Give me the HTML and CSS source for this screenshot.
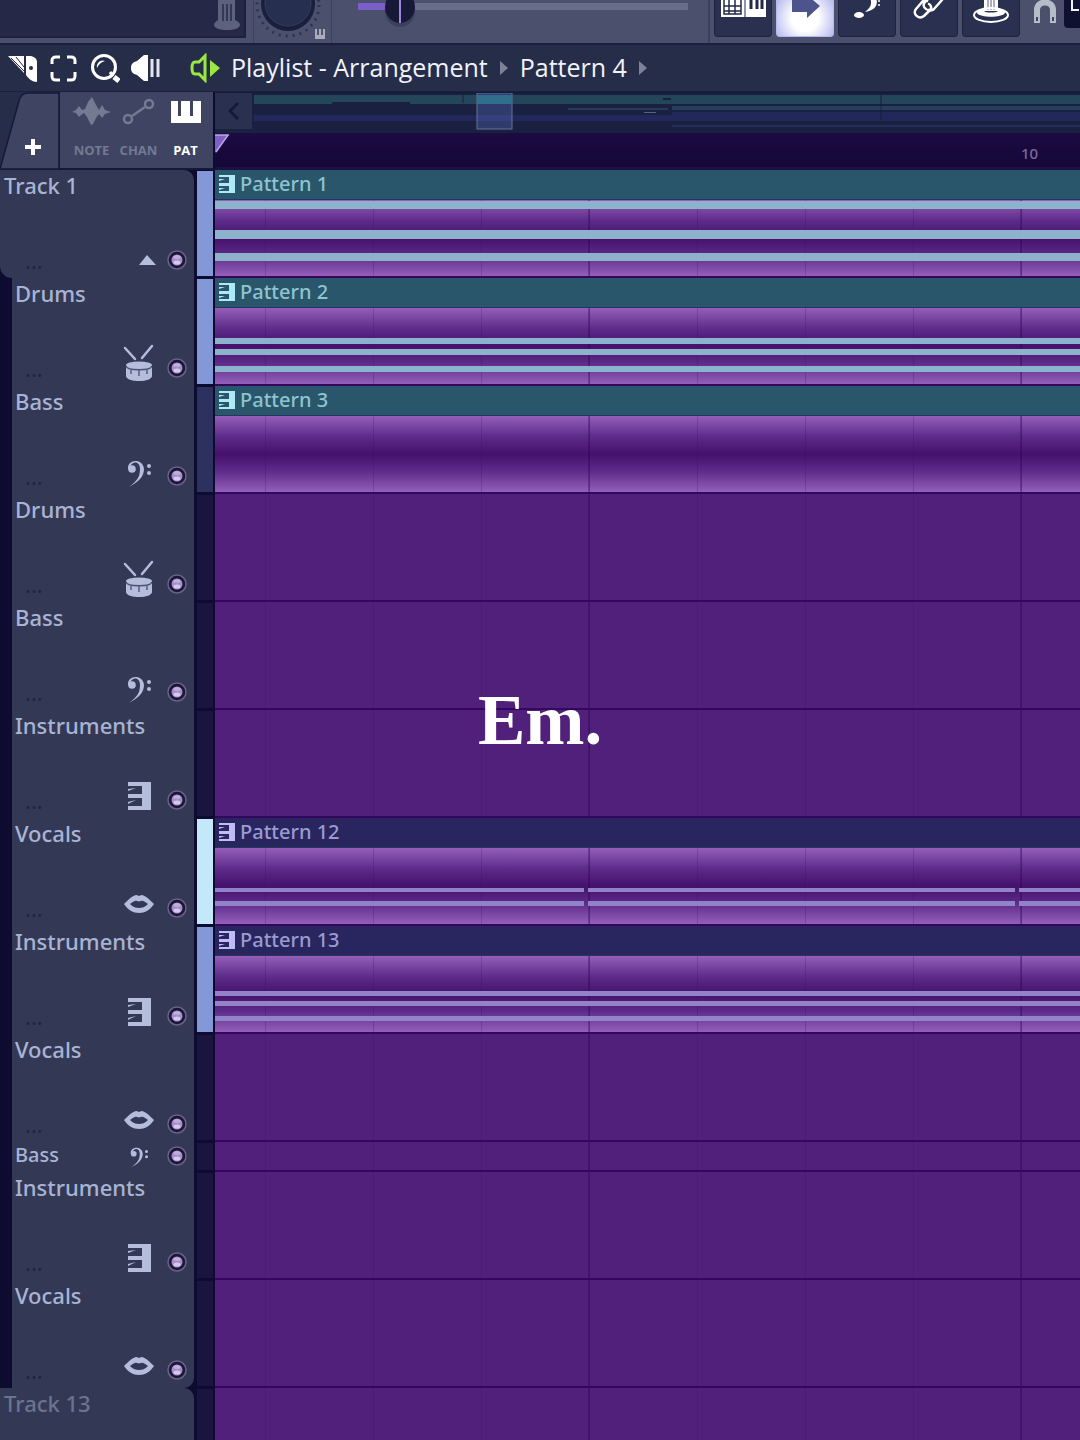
FILE: index.html
```
<!DOCTYPE html>
<html lang="en">
<head>
  <meta charset="UTF-8">
  <meta name="viewport" content="width=device-width, initial-scale=1.0">
  <title>Playlist - Arrangement</title>
  <link rel="stylesheet" href="styles.css">
</head>
<body>
  <svg class="sprite" aria-hidden="true">
    <symbol id="i-drum" viewBox="0 0 40 40">
      <path d="M6 4l10 11M33 2L23 14" stroke="currentColor" stroke-width="2.5" stroke-linecap="round"/>
      <path d="M7 22v10c0 3 6 5 13 5s13-2 13-5V22z" fill="currentColor"/>
      <ellipse cx="20" cy="21" rx="13" ry="3.5" fill="currentColor"/>
      <path d="M7 22c1 5 25 5 26 0M12 25v5M20 26v6M28 25v5" fill="none" stroke="#4c5270" stroke-width="1.3"/>
    </symbol>
    <symbol id="i-bass" viewBox="0 0 40 40">
      <circle cx="13" cy="17" r="3.8" fill="currentColor"/>
      <path d="M9 17C8 7 24 6 25 17c0 8-6 13-15 18 8-6 11-10 11-18 0-8-8-9-11 0z" fill="currentColor"/>
      <circle cx="30" cy="14" r="2" fill="currentColor"/>
      <circle cx="30" cy="21" r="2" fill="currentColor"/>
    </symbol>
    <symbol id="i-keys" viewBox="0 0 40 40">
      <path d="M9 6h23v28H9v-4h14v-8H9v-4h14v-8H9z" fill="currentColor"/>
      <path d="M9 13l8-1-8 3zM9 26l8-2-8 4z" fill="currentColor"/>
    </symbol>
    <symbol id="i-lips" viewBox="0 0 40 40">
      <path fill-rule="evenodd" d="M5 20c5-5 8-8 12-9 2 0 2 1 3 1s1-1 3-1c4 1 7 4 12 9-4 6-9 9-15 9S9 26 5 20zm6 0c3 3 6 4 9 4s6-1 9-4c-3-2-5-4-7-3-2 .6-2 .6-4 0-2-1-4 1-7 3z" fill="currentColor"/>
    </symbol>
    <symbol id="i-fold" viewBox="0 0 40 40">
      <path d="M20 29l8-10 9 10z" fill="currentColor"/>
    </symbol>
    <symbol id="i-led" viewBox="0 0 20 20">
      <circle cx="10" cy="10" r="9" fill="#1d1638" stroke="#69638a" stroke-width="1.5"/>
      <circle cx="10" cy="10" r="5.5" fill="#a48fcb"/>
      <ellipse cx="10" cy="7" rx="3.5" ry="1.8" fill="#bfb2da"/>
      <ellipse cx="10" cy="12.5" rx="3.5" ry="2" fill="#d5c8ec"/>
    </symbol>
    <symbol id="i-clip" viewBox="0 0 16 18">
      <path d="M0 0h16v18H0v-2h10v-5H0V8h10V2H0z" fill="currentColor"/>
      <path d="M0 4l6 0-6 2zM0 13l6 0-6 2z" fill="currentColor"/>
    </symbol>
    <symbol id="i-arrow" viewBox="0 0 10 16">
      <path d="M1 1l8 7-8 7z" fill="currentColor"/>
    </symbol>
  </svg>

  <header class="toolbar">
    <div class="hint">
      <svg width="26" height="30" viewBox="0 0 26 30"><path d="M4 0h17v20c3 1 5 3 5 5 0 3-6 5-13 5S0 28 0 25c0-2 2-4 4-5z" fill="#5d627c"/><path d="M9 4v17M13 4v17M17 4v17" stroke="#343858" stroke-width="2"/></svg>
    </div>
    <div class="knob">
      <svg width="77" height="44" viewBox="0 0 77 44">
        <circle cx="34" cy="5" r="31" fill="none" stroke="#2d3350" stroke-width="3" stroke-dasharray="2 5"/>
        <circle cx="34" cy="4" r="27" fill="#191f3c"/>
        <circle cx="34" cy="3" r="23" fill="#262f50" stroke="#343c60"/>
        <path d="M61 29h10v10H61z" fill="#a9adbd"/>
        <path d="M64 29v6M68 29v6" stroke="#333954" stroke-width="1.5"/>
      </svg>
    </div>
    <div class="pitch">
      <input type="range" class="slider" min="0" max="100" value="9" aria-label="Song position">
    </div>
    <div class="modes">
      <button class="mode" aria-label="Typing keyboard">
        <svg width="58" height="36" viewBox="0 0 58 36"><path d="M7-5h45v22H7z" fill="#fff"/><path d="M10 0v14h17V0M10 6h17M10 11h17M15 0v14M21 0v14" fill="none" stroke="#232848" stroke-width="1.5"/><path d="M31-5v22" stroke="#232848"/><path d="M37-5V9M43-5V9M48-5V9" stroke="#232848" stroke-width="3"/></svg>
      </button>
      <button class="mode active" aria-label="Step edit">
        <svg width="58" height="36" viewBox="0 0 58 36"><path d="M16 0h15v-5l13 11-13 12v-6H16z" fill="#4d548b"/></svg>
      </button>
      <button class="mode" aria-label="Slide">
        <svg width="58" height="36" viewBox="0 0 58 36"><ellipse cx="21" cy="15" rx="5" ry="3" fill="#fff"/><path d="M32-2c3 7-1 11-5 14 9-1 14-7 11-14z" fill="#fff"/><path d="M41 0v8" stroke="#fff" stroke-width="1.5" stroke-dasharray="2 2"/></svg>
      </button>
      <button class="mode" aria-label="Link">
        <svg width="58" height="36" viewBox="0 0 58 36"><g fill="none" stroke="#fff" stroke-width="2.5" stroke-linecap="round"><path d="M27 1c-2-1-4 0-5 1l-6 7c-4 5 3 11 8 7l6-6c2-2 1-5-1-6"/><path d="M26 9c-3-2-3-5-1-7l8-8M28 10c3 1 5 0 6-1l8-9"/></g></svg>
      </button>
      <button class="mode" aria-label="Online">
        <svg width="58" height="36" viewBox="0 0 58 36"><path d="M22-3h14v14H22z" fill="#fff"/><path d="M26-2v12M29-2v12M32-2v12" stroke="#596080"/><ellipse cx="29" cy="15" rx="17" ry="7" fill="none" stroke="#fff" stroke-width="2"/><path d="M15 13c0-3 3-4 7-4v2c2 2 12 2 14 0V9c4 0 7 1 7 4-3 5-25 5-28 0z" fill="#fff"/></svg>
      </button>
    </div>
    <svg class="magnet" width="26" height="26" viewBox="0 0 26 26"><path d="M5 20V10c0-10 16-10 16 0v10" fill="none" stroke="#b3bec7" stroke-width="6"/><path d="M3 16h4v6H3zM19 16h4v6h-4z" fill="#3d4564" stroke="#b3bec7" stroke-width="2"/></svg>
    <div class="snap">
      <svg width="15" height="27" viewBox="0 0 15 27"><path d="M8-2v12h9" fill="none" stroke="#f0f2f8" stroke-width="2"/></svg>
    </div>
  </header>

  <nav class="titlebar">
    <button class="tool" aria-label="Slice">
      <svg width="30" height="30" viewBox="0 0 30 30"><path d="M0 3h16v17z" fill="#fff"/><path d="M3 5l13 13M8 4l8 10" stroke="#262c48"/><path d="M18 3h5c4 1 6 3 6 6v20c-5 0-8-3-11-7z" fill="#fff"/><circle cx="23" cy="15" r="2" fill="#262c48"/></svg>
    </button>
    <button class="tool" aria-label="Select">
      <svg width="30" height="30" viewBox="0 0 30 30"><path d="M3 11V8c0-3 1-4 4-4h4M18 4h4c3 0 4 1 4 4v3M26 19v4c0 3-1 4-4 4h-4M11 27H7c-3 0-4-1-4-4v-4" fill="none" stroke="#fff" stroke-width="3"/></svg>
    </button>
    <button class="tool" aria-label="Zoom">
      <svg width="30" height="30" viewBox="0 0 30 30"><circle cx="14" cy="14" r="11.5" fill="none" stroke="#fff" stroke-width="3"/><path d="M7 15c-1-5 4-9 8-7-4 1-6 3-8 7z" fill="#fff"/><path d="M20 19l3 4" stroke="#fff" stroke-width="3"/><path d="M24 24l5 4" stroke="#fff" stroke-width="5"/></svg>
    </button>
    <button class="tool" aria-label="Playback">
      <svg width="30" height="30" viewBox="0 0 30 30"><path d="M0 15c0-4 2-6 6-7l7-6h4v26h-4l-7-6c-4-1-6-3-6-7z" fill="#fff"/><path d="M21 6v18M27 6v18" stroke="#e4e6f0" stroke-width="3"/></svg>
    </button>
    <button class="tool tool-menu" aria-label="Playlist menu">
      <svg width="30" height="30" viewBox="0 0 30 30"><path d="M15 3v24l-6-6H5c-4 0-4-12 0-12h4z" fill="none" stroke="#9be93f" stroke-width="3"/><path d="M20 7l10 8-10 9z" fill="#9be93f"/></svg>
    </button>
    <span class="crumb">Playlist - Arrangement</span>
    <svg class="crumb-arrow" width="10" height="16"><use href="#i-arrow"/></svg>
    <span class="crumb">Pattern 4</span>
    <svg class="crumb-arrow" width="10" height="16"><use href="#i-arrow"/></svg>
  </nav>

  <section class="head">
    <div class="picker">
      <button class="add" aria-label="Add track">
        <svg width="59" height="77" viewBox="0 0 59 77"><path d="M0 77L19 9c2-6 4-8 9-8h31v76z" fill="#3e4462" stroke="#141a3a" stroke-width="1.5"/><path d="M33 47v16M25 55h16" stroke="#fff" stroke-width="4"/></svg>
      </button>
      <div class="kinds">
        <button class="kind">
          <svg width="40" height="30" viewBox="0 0 40 30"><path d="M0 16l4-2 3-4 3 4 3-1 3-7 4-5 4 8 3 5 3-5 3 5 6 2-6 2-3 4-3-4-3 4-3 6-2 1-4-8-3-4-3 2-2 2-3-4z" fill="currentColor"/></svg>
          NOTE
        </button>
        <button class="kind">
          <svg width="40" height="30" viewBox="0 0 40 30"><g fill="none" stroke="currentColor" stroke-width="2.5"><circle cx="9" cy="23" r="4"/><circle cx="30" cy="8" r="4"/><path d="M13 20L26 11"/></g></svg>
          CHAN
        </button>
        <button class="kind selected">
          <svg width="40" height="30" viewBox="0 0 40 30"><path d="M5 5h7v15h3V5h9v15h3V5h8v22H5z" fill="currentColor"/></svg>
          PAT
        </button>
      </div>
    </div>
    <div class="timeline">
      <div class="overview">
        <button class="scroll" aria-label="Scroll left">
          <svg width="12" height="18" viewBox="0 0 12 18"><path d="M10 1L2 9l8 8" fill="none" stroke="#141936" stroke-width="2.5"/></svg>
        </button>
        <svg class="minimap" height="40">
          <rect y="2" width="100%" height="7" fill="#23465a"/>
          <rect x="156" y="9" width="100%" height="2" fill="#23465a"/>
          <rect width="78" y="9" height="2" fill="#23465a"/>
          <rect y="22" width="100%" height="6" fill="#23285a"/>
          <rect x="314" y="15" width="100" height="2" fill="#263a5c"/>
          <rect x="390" y="19" width="12" height="1" fill="#59627e"/>
          <rect x="409" y="5" width="8" height="2" fill="#17203c"/>
          <rect x="418" y="13" width="100%" height="4" fill="#24405e"/>
          <rect x="418" y="19" width="100%" height="9" fill="#23285a"/>
          <rect x="418" y="32" width="100%" height="2" fill="#20305a"/>
          <path d="M209 2v8M627 2v25" stroke="#17203c"/>
          <rect x="223" y="0" width="35" height="36" fill="#5a6cc4" fill-opacity=".35" stroke="#68709a"/>
          <rect x="224" y="2" width="33" height="9" fill="#2e7590" fill-opacity=".8"/>
        </svg>
      </div>
      <div class="ruler">
        <svg class="marker" width="15" height="20" viewBox="0 0 15 20"><path d="M0 1h14L0 19z" fill="#8060c4"/><path d="M0 1h13L1 18" fill="none" stroke="#b9a5e4" stroke-width="1.5"/></svg>
        <span class="bar-number">10</span>
      </div>
    </div>
  </section>

  <main class="tracks">
    <div class="track parent">
      <div class="panel">
        <span class="name">Track 1</span>
        <div class="controls"><span class="more">...</span><svg class="icon"><use href="#i-fold"/></svg><button class="led" aria-label="Mute Track 1"><svg><use href="#i-led"/></svg></button></div>
      </div>
      <div class="strip on"></div>
      <div class="lane">
        <div class="clip teal">
          <div class="clip-title"><svg><use href="#i-clip"/></svg>Pattern 1</div>
          <svg class="notes"><rect y="1" width="100%" height="8"/><rect y="30" width="100%" height="9"/><rect y="53" width="100%" height="8"/></svg>
        </div>
      </div>
    </div>
    <div class="track">
      <div class="panel">
        <span class="name">Drums</span>
        <div class="controls"><span class="more">...</span><svg class="icon"><use href="#i-drum"/></svg><button class="led" aria-label="Mute Drums"><svg><use href="#i-led"/></svg></button></div>
      </div>
      <div class="strip on"></div>
      <div class="lane">
        <div class="clip teal">
          <div class="clip-title"><svg><use href="#i-clip"/></svg>Pattern 2</div>
          <svg class="notes"><rect y="30" width="100%" height="6"/><rect y="41" width="100%" height="6"/><rect y="58" width="100%" height="6"/></svg>
        </div>
      </div>
    </div>
    <div class="track">
      <div class="panel">
        <span class="name">Bass</span>
        <div class="controls"><span class="more">...</span><svg class="icon"><use href="#i-bass"/></svg><button class="led" aria-label="Mute Bass"><svg><use href="#i-led"/></svg></button></div>
      </div>
      <div class="strip dim"></div>
      <div class="lane">
        <div class="clip teal">
          <div class="clip-title"><svg><use href="#i-clip"/></svg>Pattern 3</div>
          <svg class="notes"></svg>
        </div>
      </div>
    </div>
    <div class="track">
      <div class="panel">
        <span class="name">Drums</span>
        <div class="controls"><span class="more">...</span><svg class="icon"><use href="#i-drum"/></svg><button class="led" aria-label="Mute Drums"><svg><use href="#i-led"/></svg></button></div>
      </div>
      <div class="strip"></div>
      <div class="lane"></div>
    </div>
    <div class="track">
      <div class="panel">
        <span class="name">Bass</span>
        <div class="controls"><span class="more">...</span><svg class="icon"><use href="#i-bass"/></svg><button class="led" aria-label="Mute Bass"><svg><use href="#i-led"/></svg></button></div>
      </div>
      <div class="strip"></div>
      <div class="lane"></div>
    </div>
    <div class="track">
      <div class="panel">
        <span class="name">Instruments</span>
        <div class="controls"><span class="more">...</span><svg class="icon"><use href="#i-keys"/></svg><button class="led" aria-label="Mute Instruments"><svg><use href="#i-led"/></svg></button></div>
      </div>
      <div class="strip"></div>
      <div class="lane"></div>
    </div>
    <div class="track">
      <div class="panel">
        <span class="name">Vocals</span>
        <div class="controls"><span class="more">...</span><svg class="icon"><use href="#i-lips"/></svg><button class="led" aria-label="Mute Vocals"><svg><use href="#i-led"/></svg></button></div>
      </div>
      <div class="strip bright"></div>
      <div class="lane">
        <div class="clip indigo">
          <div class="clip-title"><svg><use href="#i-clip"/></svg>Pattern 12</div>
          <svg class="notes">
            <rect y="40" width="369" height="4"/><rect x="373" y="40" width="427" height="4"/><rect x="804" y="40" width="100%" height="4"/>
            <rect y="53" width="369" height="5"/><rect x="373" y="53" width="427" height="5"/><rect x="804" y="53" width="100%" height="5"/>
          </svg>
        </div>
      </div>
    </div>
    <div class="track">
      <div class="panel">
        <span class="name">Instruments</span>
        <div class="controls"><span class="more">...</span><svg class="icon"><use href="#i-keys"/></svg><button class="led" aria-label="Mute Instruments"><svg><use href="#i-led"/></svg></button></div>
      </div>
      <div class="strip on"></div>
      <div class="lane">
        <div class="clip indigo">
          <div class="clip-title"><svg><use href="#i-clip"/></svg>Pattern 13</div>
          <svg class="notes"><rect y="35" width="100%" height="5"/><rect y="45" width="100%" height="5"/><rect y="60" width="100%" height="5"/></svg>
        </div>
      </div>
    </div>
    <div class="track">
      <div class="panel">
        <span class="name">Vocals</span>
        <div class="controls"><span class="more">...</span><svg class="icon"><use href="#i-lips"/></svg><button class="led" aria-label="Mute Vocals"><svg><use href="#i-led"/></svg></button></div>
      </div>
      <div class="strip"></div>
      <div class="lane"></div>
    </div>
    <div class="track small">
      <div class="panel">
        <span class="name">Bass</span>
        <div class="controls"><svg class="icon"><use href="#i-bass"/></svg><button class="led" aria-label="Mute Bass"><svg><use href="#i-led"/></svg></button></div>
      </div>
      <div class="strip"></div>
      <div class="lane"></div>
    </div>
    <div class="track">
      <div class="panel">
        <span class="name">Instruments</span>
        <div class="controls"><span class="more">...</span><svg class="icon"><use href="#i-keys"/></svg><button class="led" aria-label="Mute Instruments"><svg><use href="#i-led"/></svg></button></div>
      </div>
      <div class="strip"></div>
      <div class="lane"></div>
    </div>
    <div class="track last-child">
      <div class="panel">
        <span class="name">Vocals</span>
        <div class="controls"><span class="more">...</span><svg class="icon"><use href="#i-lips"/></svg><button class="led" aria-label="Mute Vocals"><svg><use href="#i-led"/></svg></button></div>
      </div>
      <div class="strip"></div>
      <div class="lane"></div>
    </div>
    <div class="track parent unused">
      <div class="panel">
        <span class="name">Track 13</span>
      </div>
      <div class="strip"></div>
      <div class="lane"></div>
    </div>
  </main>

  <p class="caption">Em.</p>
</body>
</html>
```

FILE: styles.css
```
:root {
  --panel: #333955;
  --ink: #a9b4d4;
  --edge: #0e0b30;
  --grid: repeating-linear-gradient(to right, transparent 0 373px, rgba(38, 0, 80, 0.3) 373px 375px, transparent 375px 432px),
    repeating-linear-gradient(to right, transparent 0 50px, rgba(50, 10, 90, 0.22) 50px 51px, transparent 51px 108px);
}
* {
  box-sizing: border-box;
}
body {
  margin: 0;
  height: 100vh;
  display: flex;
  flex-direction: column;
  overflow: hidden;
  position: relative;
  background: #0e0b30;
  font-family: "Noto Sans", "Open Sans", sans-serif;
  color: var(--ink);
}
button {
  padding: 0;
  border: none;
  background: none;
  color: inherit;
  font: inherit;
  cursor: pointer;
}
svg {
  display: block;
  flex: none;
}
.sprite {
  position: absolute;
  width: 0;
  height: 0;
}

/* Top toolbar */
.toolbar {
  flex: none;
  display: flex;
  align-items: flex-start;
  height: 45px;
  overflow: hidden;
  background: #4b516d;
  border-bottom: 2px solid #1b2040;
}
.hint {
  display: flex;
  justify-content: flex-end;
  width: 246px;
  height: 38px;
  padding-right: 4px;
  margin-right: 7px;
  background: #252947;
  border-right: 2px solid #1d2140;
  border-bottom: 2px solid #1d2140;
}
.knob {
  border-left: 1px solid #3a405e;
  border-right: 1px solid #3a405e;
}
.pitch {
  flex: 1;
  height: 44px;
  padding: 0 20px 0 26px;
  border-right: 2px solid #3a405e;
}
.slider {
  display: block;
  width: 100%;
  height: 32px;
  margin: -10px 0 0;
  appearance: none;
  background: none;
}
.slider::-webkit-slider-runnable-track {
  height: 7px;
  background: linear-gradient(to right, #7a5fc8 10%, #676e8a 10%);
}
.slider::-webkit-slider-thumb {
  appearance: none;
  width: 30px;
  height: 32px;
  margin-top: -12px;
  border-radius: 50%;
  background: linear-gradient(to right, transparent 14px, #9a86dc 14px 16px, transparent 16px), #171936;
  box-shadow: 0 4px 0 #3b405d;
}
.modes {
  display: flex;
  gap: 4px;
  margin-left: 4px;
}
.mode {
  width: 58px;
  height: 37px;
  background: #2a3050;
  border: 1px solid #1e2342;
  border-top: none;
  border-radius: 0 0 4px 4px;
  overflow: hidden;
}
.mode svg {
  margin-left: -1px;
}
.mode.active {
  background: radial-gradient(circle at center, #ffffff 40%, #b5b9ef);
  border-color: #b5b9ef;
}
.magnet {
  margin: 0 6px 0 12px;
}
.snap {
  width: 16px;
  height: 28px;
  background: #0e1230;
  border-radius: 0 0 0 4px;
  overflow: hidden;
}

/* Window title */
.titlebar {
  flex: none;
  display: flex;
  align-items: center;
  gap: 11px;
  height: 47px;
  padding-left: 8px;
  background: #262d49;
  border-bottom: 1px solid #1b2040;
}
.tool-menu {
  margin-left: 18px;
}
.crumb {
  font-family: "Open Sans", "Noto Sans", sans-serif;
  font-size: 25px;
  font-weight: 500;
  line-height: 32px;
  padding-bottom: 2px;
  color: #f1f3fa;
  white-space: nowrap;
}
.crumb-arrow {
  color: #7c8299;
}

/* Picker and timeline */
.head {
  flex: none;
  display: flex;
  height: 78px;
  background: #262d49;
}
.picker {
  display: flex;
  width: 215px;
  border-right: 2px solid #0e0b30;
  border-bottom: 2px solid #141a3a;
}
.add {
  width: 59px;
}
.kinds {
  flex: 1;
  display: flex;
  background: #3e4462;
  border-left: 1px solid #141a3a;
  padding: 4px 4px 0 8px;
}
.kind {
  flex: 1;
  display: flex;
  flex-direction: column;
  align-items: center;
  gap: 15px;
  font-family: "Open Sans", sans-serif;
  font-size: 13px;
  font-weight: 700;
  line-height: 18px;
  color: #747a92;
}
.kind.selected {
  color: #ffffff;
}
.timeline {
  flex: 1;
  min-width: 0;
}
.overview {
  display: flex;
  height: 41px;
  background: #1a2140;
  border-top: 1px solid #141a3a;
}
.scroll {
  display: flex;
  align-items: center;
  justify-content: center;
  width: 37px;
  height: 36px;
  margin-right: 2px;
  background: #2a3150;
}
.minimap {
  flex: 1;
  min-width: 0;
}
.ruler {
  position: relative;
  height: 37px;
  padding-top: 1px;
  background: linear-gradient(#1b0b42, #150737);
  border-bottom: 3px solid #1b1145;
}
.bar-number {
  position: absolute;
  left: 806px;
  top: 8px;
  font-size: 15px;
  font-weight: 500;
  line-height: 24px;
  color: #796b9e;
}

/* Tracks */
.tracks {
  flex: 1;
  min-height: 0;
  overflow: hidden;
}
.track {
  display: flex;
  height: 108px;
  background: var(--edge);
}
.panel {
  display: flex;
  flex-direction: column;
  justify-content: space-between;
  width: 182px;
  margin-left: 12px;
  padding-left: 3px;
  background: var(--panel);
}
.parent .panel {
  width: 194px;
  margin-left: 0;
  padding-left: 4px;
  border-radius: 0 10px 0 12px;
}
.last-child .panel {
  border-radius: 0 0 10px 0;
}
.name {
  font-size: 22px;
  font-weight: 500;
  line-height: 30px;
  white-space: nowrap;
}
.unused .name {
  color: #6c7390;
}
.controls {
  display: flex;
  align-items: flex-end;
  justify-content: flex-end;
  padding: 0 7px 2px 0;
}
.more {
  margin-right: auto;
  padding-left: 10px;
  font-size: 22px;
  line-height: 32px;
  color: #1f2545;
}
.parent .more {
  padding-left: 21px;
}
.icon {
  width: 40px;
  height: 40px;
  margin-right: 8px;
  color: #b4bddb;
}
.led {
  margin-bottom: 6px;
}
.led svg {
  width: 20px;
  height: 20px;
}
.strip {
  width: 21px;
  border: solid var(--edge);
  border-width: 1px 2px 2px 3px;
  background: #19153f;
}
.strip.on {
  background: #8497d7;
}
.strip.dim {
  background: #2d3160;
}
.strip.bright {
  background: #c4e7f9;
}
.lane {
  flex: 1;
  min-width: 0;
  background: var(--grid), #50207a;
  border-bottom: 2px solid #34065f;
}
.small {
  height: 30px;
}
.small .panel {
  flex-direction: row;
}
.small .name {
  font-size: 20px;
  line-height: 26px;
}
.small .controls {
  align-items: center;
}
.small .icon {
  width: 30px;
  height: 30px;
  margin-right: 13px;
}
.small .led {
  margin-bottom: 0;
}

/* Clips */
.clip-title {
  display: flex;
  align-items: center;
  gap: 5px;
  height: 30px;
  padding: 0 0 2px 4px;
  font-size: 20px;
  font-weight: 500;
  line-height: 26px;
  border-bottom: 1px solid #24385c;
}
.clip-title svg {
  width: 16px;
  height: 18px;
}
.notes {
  width: 100%;
  height: 76px;
  background: var(--grid), linear-gradient(#935fb9, #5c2a88 28%, #45116b 50%, #5c2a88 72%, #935fb9);
}
.teal .clip-title {
  background: #29566a;
  color: #8fc3cf;
}
.teal .clip-title svg {
  color: #aeeaf6;
}
.teal .notes {
  fill: #8cb3cb;
}
.indigo .clip-title {
  background: #29265f;
  color: #9a9bd0;
}
.indigo .clip-title svg {
  color: #c1baf6;
}
.indigo .notes {
  fill: #9282c7;
}

/* Text over the playlist */
.caption {
  position: absolute;
  top: 50%;
  left: 50%;
  margin: 0;
  transform: translate(-50%, -50%);
  font-family: "Liberation Serif", serif;
  font-size: 71px;
  font-weight: 700;
  line-height: 80px;
  color: #ffffff;
}
```
